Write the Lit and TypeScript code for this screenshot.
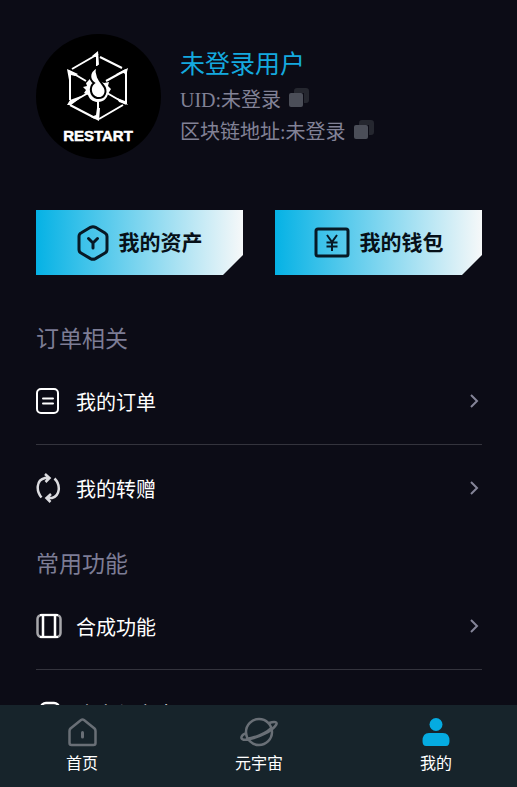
import { LitElement, html, css, svg } from "lit";
import { customElement } from "lit/decorators.js";

const copyIcon = html`<svg width="20" height="20" viewBox="0 0 20 20" aria-hidden="true">
  <path d="M5 3Q5 0 8 0H17Q20 0 20 3V12Q20 15 17 15H15V5H5Z" fill="#25272f" />
  <rect x="0" y="5" width="14" height="14" rx="2" fill="#4b4e58" />
</svg>`;

const logo = html`<svg class="avatar" viewBox="0 0 125 125" role="img" aria-label="RESTART">
  <circle cx="62.5" cy="62.5" r="62.5" fill="#000" />
  <g fill="none" stroke="#fff" stroke-width="2">
    <path d="M36 35 62 20M64 23 86 34M90 36V70M87 71 63 85M59 84 34 71M34 66V38" />
    <path d="M62 86V64M33 37 50 47M90 36 70 47M33 70 52 59M90 70 71 59M61 19V32" />
  </g>
  <g fill="#fff">
    <path d="M56 22 62 17 63 31 60 30V23ZM31 35 42 40 39 42 35 41V47L33 46ZM92 34 90 42 88 39 80 40ZM92 71 83 68 81 64 89 67ZM63 87 55 83 60 81 61 74 64 74ZM31 71 34 66 45 62 43 65 35 71Z" />
    <path d="M57 44C53 44 52 48 50 49L51 52 47 53 50 56 48 59 52 61C54 67 59 68 62 68C68 68 71 64 72 60L75 55 72 52 73 48 68 49Z" />
  </g>
  <path d="M61 33C51 39 54 46 58 49C53 53 54 62 61 64C69 65 72 57 67 51C64 47 59 41 61 33Z" fill="#fff" stroke="#000" stroke-width="2" />
  <text x="62" y="107" text-anchor="middle" class="brand">RESTART</text>
</svg>`;

const assetIcon = html`<svg width="32" height="36" viewBox="0 0 32 36" aria-hidden="true">
  <path d="M13.5 2.3Q16 1 18.5 2.3L28 8Q30 9.200 30 11.500V24.500Q30 27 28 28L18.500 33.600Q16 35 13.500 33.600L4 28Q2 27 2 24.500V11.500Q2 9 4 8Z" fill="none" stroke="#071925" stroke-width="3" />
  <path d="M11.500 13.500 16 18 20.500 13.500M16 18V23" fill="none" stroke="#071925" stroke-width="3" stroke-linecap="round" />
</svg>`;

const walletIcon = html`<svg width="36" height="32" viewBox="0 0 36 32" aria-hidden="true">
  <rect x="2" y="2" width="32" height="27" rx="2" fill="none" stroke="#071925" stroke-width="3" />
  <path d="M13 8 18 15 23 8M18 15V24M12.500 15.500H23.500M12.500 19.500H23.500" fill="none" stroke="#071925" stroke-width="2" />
</svg>`;

const orderIcon = svg`<rect x="1" y="3" width="21" height="24" rx="4" /><path d="M7 12.500H17M7 17.500H17" stroke-linecap="round" />`;
const transferIcon = svg`<g stroke="#dcdce0" stroke-width="2.500"><path d="M5.500 24.500C0 18 0 7 9 5L13 5M9 1 13.500 5 9.500 9M18.500 5.500C25 12 24 23 16 25L11 25M15 21 10.500 25 14.500 29" /></g>`;
const mergeIcon = svg`<rect x="1.500" y="4" width="23" height="22" rx="4" stroke="#a8a8ac" stroke-width="2.500" /><path d="M7 4V26M19 4V26" stroke-width="2.500" /><path d="M4 4H22M4 26H22" />`;
const accountIcon = svg`<rect x="5" y="5" width="18" height="23" rx="5" stroke-width="2.500" /><path d="M10 13H18M10 18H18" />`;

const homeIcon = svg`<path d="M3.500 11.500 14 3Q15.500 2 17 3L27.500 11.500Q28.500 12.500 28.500 14V26Q28.500 28 26.500 28H4.500Q2.500 28 2.500 26V14Q2.500 12.500 3.500 11.500Z" fill="none" stroke="#696f76" stroke-width="2.500" /><path d="M15.500 15.500V20" stroke="#696f76" stroke-width="3" stroke-linecap="round" />`;
const planetIcon = svg`<g fill="none" stroke="#696f76" stroke-width="2.500"><circle cx="19" cy="15" r="13" /><path d="M29 6C35 4 38 5 36 8C32 14 20 20 10 22C3 24 0 22 2 19Q3 17 7 16M32 10C27 16 15 21 6 22" /></g>`;
const personIcon = svg`<circle cx="16" cy="7.500" r="6.500" fill="#05abe1" /><path d="M9 16H23Q29.500 16 29.500 24Q29.500 29 26 29H6Q2.500 29 2.500 24Q2.500 16 9 16Z" fill="#05abe1" />`;

@customElement("app-root")
export class AppRoot extends LitElement {
  static styles = css`
    :host {
      display: flex;
      flex-direction: column;
      height: 100vh;
      background: #0c0c16;
      color: #fff;
      font-family: "Noto Sans CJK SC", sans-serif;
    }
    * { box-sizing: border-box; }
    svg { display: block; flex: none; }
    main {
      flex: 1;
      min-height: 0;
      overflow-y: auto;
      scrollbar-width: none;
      padding: 34px 35px 0 36px;
    }
    button { border: 0; padding: 0; background: none; font: inherit; color: inherit; cursor: pointer; }
    a { color: inherit; text-decoration: none; }
    .profile { display: flex; gap: 19px; }
    .avatar { width: 125px; height: 125px; }
    .brand { font: bold 15px "Liberation Sans", sans-serif; fill: #fff; stroke: #fff; stroke-width: 0.5px; }
    .who { padding-top: 10px; min-width: 0; }
    h1 { margin: 0 0 4px; font-size: 25px; line-height: 36px; font-weight: 400; color: #14a9df; }
    .line {
      display: flex;
      align-items: center;
      gap: 8px;
      margin: 0;
      height: 32px;
      font: 20px/32px "Liberation Serif", "Noto Sans CJK SC", serif;
      color: #828296;
      white-space: nowrap;
    }
    .line svg { margin-bottom: 4px; }
    .cards { display: grid; grid-template-columns: 1fr 1fr; gap: 32px; margin-top: 51px; }
    .card {
      display: flex;
      align-items: center;
      justify-content: center;
      gap: 10px;
      height: 65px;
      font-size: 21px;
      line-height: 30px;
      font-weight: 700;
      color: #071018;
      background: linear-gradient(90deg, #05b2e5, #f6f8f9);
      clip-path: polygon(0 0, 100% 0, 100% 45px, calc(100% - 20px) 100%, 0 100%);
    }
    .card span { padding-bottom: 3px; }
    h2 { margin: 0; font-size: 23px; line-height: 34px; font-weight: 400; color: #7d7d95; }
    .orders { margin-top: 45px; }
    .common { margin-top: 14px; }
    ul { list-style: none; margin: 4px 0 0; padding: 0; }
    li + li { border-top: 1px solid #34343d; }
    .row { display: flex; align-items: center; gap: 14px; height: 86px; font-size: 20px; }
    .row span { flex: 1; }
    nav {
      flex: none;
      display: flex;
      justify-content: space-between;
      height: 82px;
      padding: 12px 65px 0 66px;
      background: #17242b;
    }
    .tab { display: flex; flex-direction: column; align-items: center; gap: 3px; font-size: 16px; line-height: 24px; }
  `;

  private row(icon: unknown, label: string) {
    return html`<li><a class="row" href="#">
      <svg width="26" height="30" viewBox="0 0 26 30" fill="none" stroke="#fff" stroke-width="2" aria-hidden="true">${icon}</svg>
      <span>${label}</span>
      <svg width="16" height="16" viewBox="0 0 16 16" fill="none" stroke="#858598" stroke-width="2" aria-hidden="true"><path d="M5 2 11 8 5 14" /></svg>
    </a></li>`;
  }

  private tab(icon: unknown, width: number, label: string) {
    return html`<a class="tab" href="#">
      <svg width=${width} height="30" viewBox="0 0 ${width} 30" aria-hidden="true">${icon}</svg>
      ${label}
    </a>`;
  }

  render() {
    return html`
      <main>
        <header class="profile">
          ${logo}
          <div class="who">
            <h1>未登录用户</h1>
            <p class="line">UID:未登录 <button aria-label="复制UID">${copyIcon}</button></p>
            <p class="line">区块链地址:未登录 <button aria-label="复制区块链地址">${copyIcon}</button></p>
          </div>
        </header>
        <div class="cards">
          <button class="card">${assetIcon}<span>我的资产</span></button>
          <button class="card">${walletIcon}<span>我的钱包</span></button>
        </div>
        <section class="orders">
          <h2>订单相关</h2>
          <ul>${this.row(orderIcon, "我的订单")}${this.row(transferIcon, "我的转赠")}</ul>
        </section>
        <section class="common">
          <h2>常用功能</h2>
          <ul>${this.row(mergeIcon, "合成功能")}${this.row(accountIcon, "账户与安全")}</ul>
        </section>
      </main>
      <nav>
        ${this.tab(homeIcon, 31, "首页")}
        ${this.tab(planetIcon, 38, "元宇宙")}
        ${this.tab(personIcon, 32, "我的")}
      </nav>
    `;
  }
}
